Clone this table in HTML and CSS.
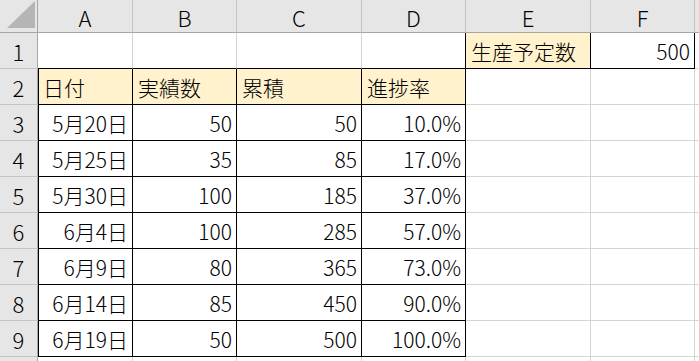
FILE: index.html
```html
<!DOCTYPE html>
<html lang="ja">
<head>
<meta charset="utf-8">
<link rel="stylesheet" href="styles.css">
</head>
<body>
<div class="sheet">
  <div class="corner"><div class="tri"></div></div>
  <div class="ch">A</div><div class="ch">B</div><div class="ch">C</div><div class="ch">D</div><div class="ch">E</div><div class="ch">F</div><div class="ch last"></div>

  <div class="rh">1</div>
  <div class="c b-b"></div><div class="c b-b"></div><div class="c b-b"></div><div class="c b-b b-r"></div>
  <div class="c fill b-b b-r">生産予定数</div><div class="c r b-b b-r">500</div><div class="c"></div>

  <div class="rh">2</div>
  <div class="c fill b-b b-r bl">日付</div><div class="c fill b-b b-r">実績数</div><div class="c fill b-b b-r">累積</div><div class="c fill b-b b-r">進捗率</div>
  <div class="c"></div><div class="c"></div><div class="c"></div>

  <div class="rh">3</div>
  <div class="c r b-b b-r bl">5月20日</div><div class="c r b-b b-r">50</div><div class="c r b-b b-r">50</div><div class="c r b-b b-r">10.0%</div>
  <div class="c"></div><div class="c"></div><div class="c"></div>

  <div class="rh">4</div>
  <div class="c r b-b b-r bl">5月25日</div><div class="c r b-b b-r">35</div><div class="c r b-b b-r">85</div><div class="c r b-b b-r">17.0%</div>
  <div class="c"></div><div class="c"></div><div class="c"></div>

  <div class="rh">5</div>
  <div class="c r b-b b-r bl">5月30日</div><div class="c r b-b b-r">100</div><div class="c r b-b b-r">185</div><div class="c r b-b b-r">37.0%</div>
  <div class="c"></div><div class="c"></div><div class="c"></div>

  <div class="rh">6</div>
  <div class="c r b-b b-r bl">6月4日</div><div class="c r b-b b-r">100</div><div class="c r b-b b-r">285</div><div class="c r b-b b-r">57.0%</div>
  <div class="c"></div><div class="c"></div><div class="c"></div>

  <div class="rh">7</div>
  <div class="c r b-b b-r bl">6月9日</div><div class="c r b-b b-r">80</div><div class="c r b-b b-r">365</div><div class="c r b-b b-r">73.0%</div>
  <div class="c"></div><div class="c"></div><div class="c"></div>

  <div class="rh">8</div>
  <div class="c r b-b b-r bl">6月14日</div><div class="c r b-b b-r">85</div><div class="c r b-b b-r">450</div><div class="c r b-b b-r">90.0%</div>
  <div class="c"></div><div class="c"></div><div class="c"></div>

  <div class="rh">9</div>
  <div class="c r b-b b-r bl">6月19日</div><div class="c r b-b b-r">50</div><div class="c r b-b b-r">500</div><div class="c r b-b b-r">100.0%</div>
  <div class="c"></div><div class="c"></div><div class="c"></div>

  <div class="rh"></div>
  <div class="c"></div><div class="c"></div><div class="c"></div><div class="c"></div>
  <div class="c"></div><div class="c"></div><div class="c"></div>
</div>
</body>
</html>
```
FILE: styles.css
```css
html, body {
  margin: 0;
  padding: 0;
  overflow: hidden;
  background: #fff;
}
.sheet {
  display: grid;
  grid-template-columns: 38px 95px 104px 125px 104px 125px 104px 1fr;
  grid-template-rows: 33px;
  grid-auto-rows: 36px;
  width: 699px;
  font-family: "Noto Sans CJK JP", "Noto Sans", sans-serif;
  font-weight: 300;
  font-size: 21px;
  color: #000;
}
.sheet > div {
  box-sizing: border-box;
  display: flex;
  align-items: center;
  line-height: 1;
  white-space: nowrap;
  overflow: hidden;
}
.corner {
  background: #e6e6e6;
  border-right: 1px solid #a6a6a6;
  border-bottom: 1px solid #a6a6a6;
  justify-content: flex-end;
  align-items: flex-end !important;
  padding: 0 2px 4px 0;
}
.tri {
  width: 28px;
  height: 27px;
  background: #b5b5b5;
  clip-path: polygon(100% 0, 100% 100%, 0 100%);
}
.ch {
  background: #e6e6e6;
  border-right: 1px solid #c4c4c4;
  border-bottom: 1px solid #a6a6a6;
  justify-content: center;
  padding-top: 1px;
  font-size: 22px;
}
.ch.last {
  border-right: none;
}
.rh {
  background: #e6e6e6;
  border-right: 1px solid #a6a6a6;
  border-bottom: 1px solid #c4c4c4;
  justify-content: center;
  font-size: 22px;
}
.c {
  background: #fff;
  border-right: 1px solid #d4d4d4;
  border-bottom: 1px solid #d4d4d4;
  padding: 1px 4px 0 5px;
}
.c.r {
  justify-content: flex-end;
}
.fill {
  background: #fff2cc;
}
.b-r {
  border-right-color: #000;
}
.b-b {
  border-bottom-color: #000;
}
.bl {
  box-shadow: inset 1px 0 0 #000;
}
```
